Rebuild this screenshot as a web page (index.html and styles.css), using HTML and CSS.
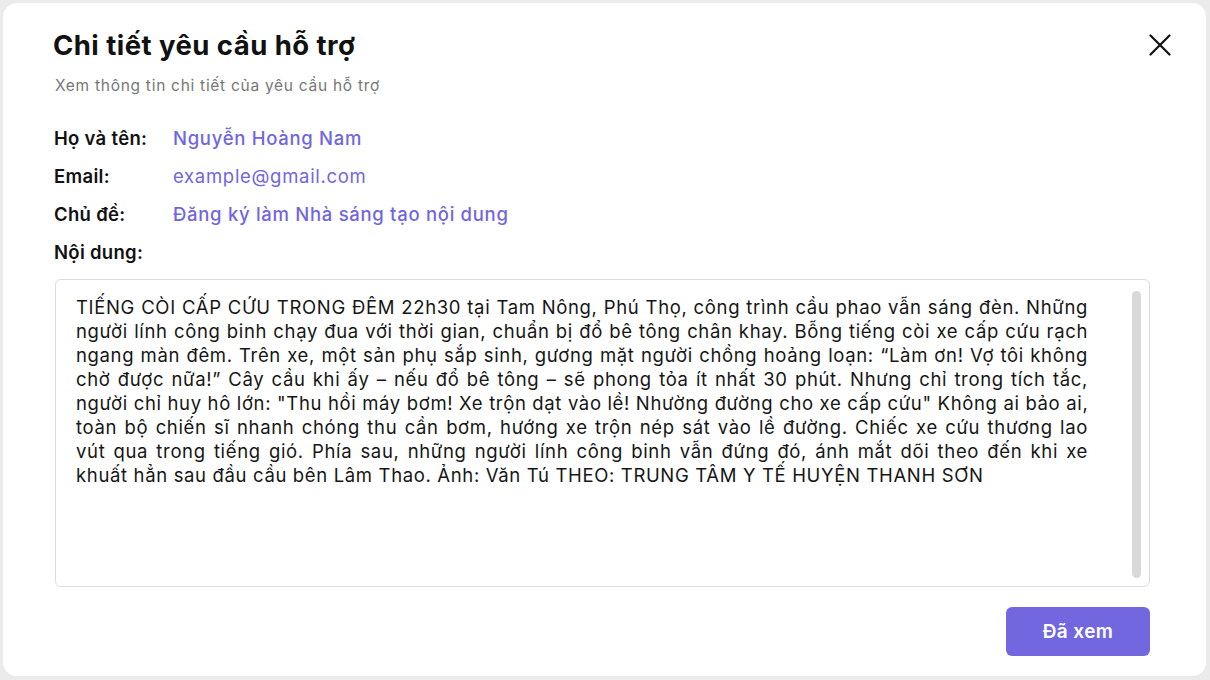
FILE: index.html
```html
<!DOCTYPE html>
<html lang="vi">
<head>
<meta charset="utf-8">
<title>Chi tiết yêu cầu hỗ trợ</title>
<link rel="stylesheet" href="styles.css">
</head>
<body>
<div class="modal">
  <button class="close" aria-label="Đóng">
    <svg width="22" height="22" viewBox="0 0 22 22"><path d="M1.5 1.5 L20.5 20.5 M20.5 1.5 L1.5 20.5" stroke="#111" stroke-width="2.2" stroke-linecap="round" fill="none"/></svg>
  </button>
  <h1 class="title">Chi tiết yêu cầu hỗ trợ</h1>
  <p class="subtitle">Xem thông tin chi tiết của yêu cầu hỗ trợ</p>
  <div class="fields">
    <div class="row"><span class="label">Họ và tên:</span><span class="value strong">Nguyễn Hoàng Nam</span></div>
    <div class="row"><span class="label">Email:</span><span class="value">example@gmail.com</span></div>
    <div class="row"><span class="label">Chủ đề:</span><span class="value strong">Đăng ký làm Nhà sáng tạo nội dung</span></div>
    <div class="row"><span class="label">Nội dung:</span></div>
  </div>
  <div class="content-box">
    <div class="content-text">
      <span class="line">TIẾNG CÒI CẤP CỨU TRONG ĐÊM 22h30 tại Tam Nông, Phú Thọ, công trình cầu phao vẫn sáng đèn. Những</span>
      <span class="line">người lính công binh chạy đua với thời gian, chuẩn bị đổ bê tông chân khay. Bỗng tiếng còi xe cấp cứu rạch</span>
      <span class="line">ngang màn đêm. Trên xe, một sản phụ sắp sinh, gương mặt người chồng hoảng loạn: “Làm ơn! Vợ tôi không</span>
      <span class="line">chờ được nữa!” Cây cầu khi ấy – nếu đổ bê tông – sẽ phong tỏa ít nhất 30 phút. Nhưng chỉ trong tích tắc,</span>
      <span class="line">người chỉ huy hô lớn: "Thu hồi máy bơm! Xe trộn dạt vào lề! Nhường đường cho xe cấp cứu" Không ai bảo ai,</span>
      <span class="line">toàn bộ chiến sĩ nhanh chóng thu cần bơm, hướng xe trộn nép sát vào lề đường. Chiếc xe cứu thương lao</span>
      <span class="line">vút qua trong tiếng gió. Phía sau, những người lính công binh vẫn đứng đó, ánh mắt dõi theo đến khi xe</span>
      <span class="line last">khuất hẳn sau đầu cầu bên Lâm Thao. Ảnh: Văn Tú THEO: TRUNG TÂM Y TẾ HUYỆN THANH SƠN</span>
    </div>
    <div class="scrollbar"></div>
  </div>
  <div class="actions">
    <button class="primary">Đã xem</button>
  </div>
</div>
</body>
</html>
```
FILE: styles.css
```css
* { box-sizing: border-box; }
html, body { margin: 0; padding: 0; }
body {
  background: #ebebeb;
  padding: 3px 4px 4px 3px;
  font-family: Inter, "Noto Sans", sans-serif;
  color: #111;
}
.modal {
  position: relative;
  background: #fff;
  border-radius: 14px;
  width: 1203px;
  height: 673px;
  padding: 26px 56px 20px 50px;
  display: flex;
  flex-direction: column;
}
.close {
  position: absolute;
  top: 31px;
  right: 35px;
  width: 22px;
  height: 22px;
  padding: 0;
  border: 0;
  background: none;
  display: flex;
}
.title {
  margin: 0;
  font-size: 27.5px;
  line-height: 32px;
  font-weight: 700;
  letter-spacing: 0.45px;
  color: #111;
}
.subtitle {
  margin: 15px 0 0 2px;
  font-size: 15.5px;
  line-height: 20px;
  letter-spacing: 0.72px;
  color: #777;
}
.fields {
  margin-top: 31px;
  display: flex;
  flex-direction: column;
  gap: 16px;
}
.row {
  display: flex;
  align-items: center;
  height: 22px;
  font-size: 18.5px;
  line-height: 22px;
  letter-spacing: 0.7px;
}
.label {
  width: 120px;
  padding-left: 1px;
  font-weight: 600;
  letter-spacing: 0.3px;
  color: #111;
}
.value {
  color: #7166de;
  font-weight: 400;
}
.value.strong { font-weight: 500; }
.content-box {
  margin-top: 16px;
  margin-left: 2px;
  height: 308px;
  border: 1px solid #dcdcdc;
  border-radius: 6px;
  display: flex;
  padding: 11px 8px 8px 20px;
}
.content-text {
  width: 1012px;
  margin-top: 4px;
  font-size: 18.5px;
  line-height: 24px;
  letter-spacing: 0.65px;
  color: #161616;
}
.line {
  display: block;
  text-align: justify;
  text-align-last: justify;
  white-space: nowrap;
}
.line.last { text-align-last: left; }
.scrollbar {
  margin-left: auto;
  width: 9px;
  height: 100%;
  background: #d9d9d9;
  border-radius: 5px;
}
.actions {
  margin-top: 20px;
  display: flex;
  justify-content: flex-end;
}
.primary {
  width: 144px;
  height: 49px;
  border: 0;
  border-radius: 6px;
  background: #7367df;
  color: #fff;
  font-family: Inter, "Noto Sans", sans-serif;
  font-size: 19px;
  letter-spacing: 0.4px;
  font-weight: 600;
}
```
